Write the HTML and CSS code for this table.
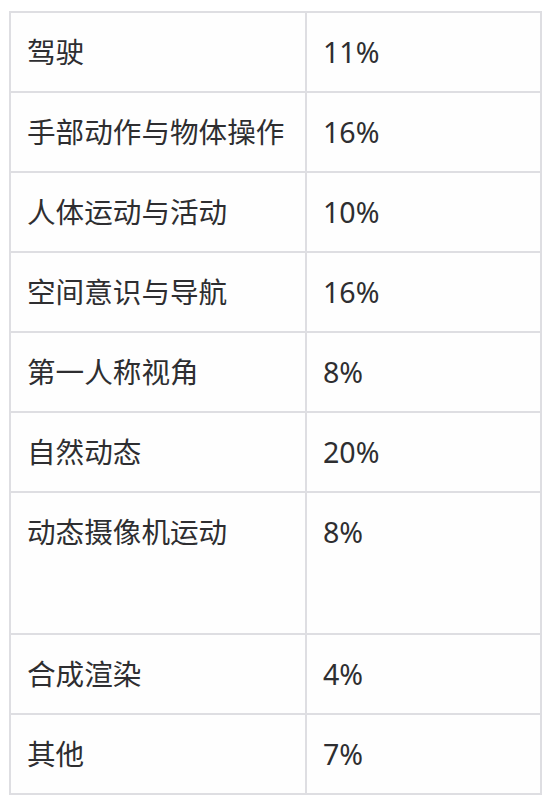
FILE: index.html
```html
<!DOCTYPE html>
<html lang="zh-CN">
<head>
<meta charset="utf-8">
<link rel="stylesheet" href="styles.css">
</head>
<body>
<table class="data">
  <tbody>
    <tr><td class="name">驾驶</td><td class="pct">11%</td></tr>
    <tr><td class="name">手部动作与物体操作</td><td class="pct">16%</td></tr>
    <tr><td class="name">人体运动与活动</td><td class="pct">10%</td></tr>
    <tr><td class="name">空间意识与导航</td><td class="pct">16%</td></tr>
    <tr><td class="name">第一人称视角</td><td class="pct">8%</td></tr>
    <tr><td class="name">自然动态</td><td class="pct">20%</td></tr>
    <tr class="tall"><td class="name">动态摄像机运动</td><td class="pct">8%</td></tr>
    <tr><td class="name">合成渲染</td><td class="pct">4%</td></tr>
    <tr><td class="name">其他</td><td class="pct">7%</td></tr>
  </tbody>
</table>
</body>
</html>
```

FILE: styles.css
```css
html, body {
  margin: 0;
  padding: 0;
  background: #ffffff;
}
body {
  padding: 11px 0 0 9px;
  font-family: "Noto Sans", "Noto Sans CJK SC", sans-serif;
  color: #2e2e31;
}
.data {
  border-collapse: collapse;
  width: 533px;
  table-layout: fixed;
}
.data td {
  border: 2px solid #dedee2;
  font-size: 28.6px;
  line-height: 46px;
  padding: 16px 16px;
  height: 46px;
  vertical-align: top;
  background: #fefefe;
}
.data td.name {
  width: 262px;
}
.data tr.tall td {
  height: 108px;
}
```
